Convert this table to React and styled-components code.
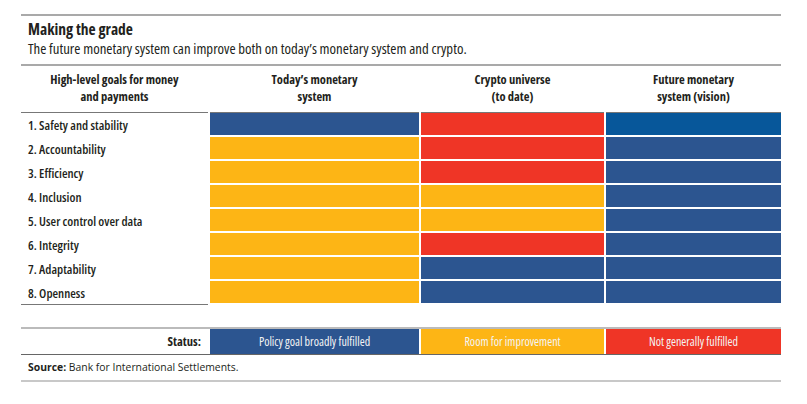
import React from "react"
import styled, { createGlobalStyle } from "styled-components"

const GlobalStyle = createGlobalStyle`
  body {
    margin: 0;
    background: #fff;
    color: #231f20;
    font-family: "Open Sans", "DejaVu Sans Condensed", sans-serif;
    font-stretch: 75%;
  }
`

const colors = {
  blue: "#2c5590",
  deep: "#07579a",
  yellow: "#fdb515",
  red: "#ef3526",
}

const Figure = styled.div`
  width: 760px;
  margin: 14px 0 0 21px;
`

const TitleBlock = styled.div`
  border-top: 2px solid #a9a9a9;
  border-bottom: 2px solid #a9a9a9;
  padding: 3px 0 6px 7px;
`

const Title = styled.div`
  font-size: 15.5px;
  font-weight: 700;
  line-height: 20px;
`

const Subtitle = styled.div`
  font-size: 14.8px;
  line-height: 19px;
`

const Grid = styled.div`
  display: grid;
  grid-template-columns: 187px 209px 183px 175px;
  column-gap: 2px;
`

const HeadCell = styled.div`
  height: 47px;
  display: flex;
  align-items: center;
  justify-content: center;
  text-align: center;
  font-size: 12.5px;
  font-weight: 700;
  line-height: 17px;
  border-bottom: 1px solid #777;
  padding-bottom: 2px;
  box-sizing: border-box;
`

const Label = styled.div`
  height: 24px;
  display: flex;
  align-items: center;
  padding-left: 7px;
  font-size: 12.8px;
  font-weight: 600;
  border-bottom: ${(p) => (p.last ? "1px solid #777" : "none")};
  box-sizing: border-box;
`

const Cell = styled.div`
  height: 22px;
  margin-bottom: 2px;
  background: ${(p) => colors[p.tone]};
`

const StatusGrid = styled(Grid)`
  margin-top: 22px;
  border-top: 2px solid #bbb;
  border-bottom: 1px solid #666;
`

const StatusLabel = styled.div`
  height: 25px;
  display: flex;
  align-items: center;
  justify-content: flex-end;
  padding-right: 7px;
  font-size: 12.5px;
  font-weight: 700;
`

const StatusCell = styled.div`
  height: 25px;
  display: flex;
  align-items: center;
  justify-content: center;
  background: ${(p) => colors[p.tone]};
  color: #f4f4f4;
  font-size: 12px;
`

const Source = styled.div`
  padding: 5px 0 5px 7px;
  border-bottom: 2px solid #c8c8c8;
  font-size: 10.4px;
  font-stretch: 100%;
  line-height: 15px;

  b {
    font-weight: 700;
  }
`

const goals = [
  ["1. Safety and stability", "blue", "red", "deep"],
  ["2. Accountability", "yellow", "red", "blue"],
  ["3. Efficiency", "yellow", "red", "blue"],
  ["4. Inclusion", "yellow", "yellow", "blue"],
  ["5. User control over data", "yellow", "yellow", "blue"],
  ["6. Integrity", "yellow", "red", "blue"],
  ["7. Adaptability", "yellow", "blue", "blue"],
  ["8. Openness", "yellow", "blue", "blue"],
]

const App = () => {
  return (
    <>
      <GlobalStyle />
      <Figure>
        <TitleBlock>
          <Title>Making the grade</Title>
          <Subtitle>
            The future monetary system can improve both on today’s monetary system and crypto.
          </Subtitle>
        </TitleBlock>
        <Grid>
          <HeadCell>
            High-level goals for money
            <br />
            and payments
          </HeadCell>
          <HeadCell>
            Today’s monetary
            <br />
            system
          </HeadCell>
          <HeadCell>
            Crypto universe
            <br />
            (to date)
          </HeadCell>
          <HeadCell>
            Future monetary
            <br />
            system (vision)
          </HeadCell>
          {goals.map(([label, ...tones], i) => (
            <React.Fragment key={label}>
              <Label last={i === goals.length - 1}>{label}</Label>
              {tones.map((tone, j) => (
                <Cell key={j} tone={tone} />
              ))}
            </React.Fragment>
          ))}
        </Grid>
        <StatusGrid>
          <StatusLabel>Status:</StatusLabel>
          <StatusCell tone="blue">Policy goal broadly fulfilled</StatusCell>
          <StatusCell tone="yellow">Room for improvement</StatusCell>
          <StatusCell tone="red">Not generally fulfilled</StatusCell>
        </StatusGrid>
        <Source>
          <b>Source:</b> Bank for International Settlements.
        </Source>
      </Figure>
    </>
  )
}

export default App
